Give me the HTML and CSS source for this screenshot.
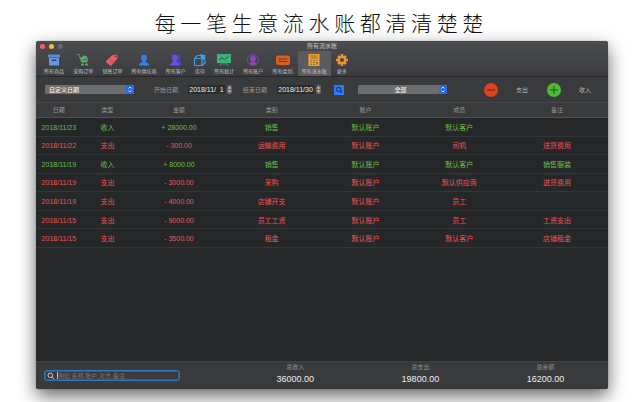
FILE: index.html
```html
<!DOCTYPE html>
<html lang="zh-CN">
<head>
<meta charset="utf-8">
<meta name="viewport" content="width=device-width, initial-scale=1">
<title>所有流水账</title>
<link rel="stylesheet" href="styles.css">
</head>
<body>
<h1 class="headline">每 一 笔 生 意 流 水 账 都 清 清 楚 楚</h1>
<main class="window">
  <header class="chrome">
    <div class="titlebar">
      <div class="lights"><span class="light close"></span><span class="light minimize"></span><span class="light zoom"></span></div>
      <span class="title">所有流水账</span>
    </div>
    <nav class="toolbar">
      <button class="tool" type="button">
        <svg class="icon" viewBox="0 0 24 24"><path fill="#5c8ddb" d="M0 1h24v6H0z"/><path fill="#6796e4" d="M2 8h20v15H2z"/><path fill="#34465f" d="M7 11h10v3H7z"/></svg>
        <span>所有商品</span></button>
      <button class="tool" type="button">
        <svg class="icon" viewBox="0 0 24 24"><path fill="none" stroke="#58a55c" stroke-width="2" d="M0 1h4l5 15h12"/><path fill="#65b868" d="M7 7l4-1 2-4 3 3 4-1v4l3 1-3 7H10z"/><circle cx="11" cy="21" r="2.4" fill="#65b868"/><circle cx="19" cy="21" r="2.4" fill="#65b868"/><path stroke="#365a3b" stroke-width="1" d="M9 11h12M14 7v8M18 7v8"/></svg>
        <span>采购订单</span></button>
      <button class="tool" type="button">
        <svg class="icon" viewBox="0 0 24 24"><path fill="#ed5c60" d="M0 14L13 2l9-1 1 8-12 14q-2 1-4-1l-6-5q-2-1-1-3z"/><circle cx="19" cy="5" r="1.8" fill="#48494c"/><path stroke="#b5474b" stroke-width="1.5" d="M7 14l6 5M10 11l6 5"/></svg>
        <span>销售订单</span></button>
      <button class="tool" type="button">
        <svg class="icon" viewBox="0 0 24 24"><path fill="#2f83ee" d="M12 1c4 0 6 3 6 7 0 3-2 4-3 6v2l6 3q1 1 1 4H2q0-3 1-4l6-3v-2C8 12 6 11 6 8c0-4 2-7 6-7z"/></svg>
        <span>所有供应商</span></button>
      <button class="tool" type="button">
        <svg class="icon" viewBox="0 0 24 24"><path fill="#4a43bd" d="M16 2c4 0 6 3 5 7l-2 6 5 4v3H13z"/><path fill="#6553e5" d="M9 1c5 0 7 3 6 8l-2 5v2l5 3q2 1 1 4H0q0-3 2-4l4-3v-2L4 9C3 4 5 1 9 1z"/></svg>
        <span>所有客户</span></button>
      <button class="tool" type="button">
        <svg class="icon wide" viewBox="0 0 26 24"><path fill="none" stroke="#469de0" stroke-width="2.4" stroke-linejoin="round" d="M2 9h15v14H2zM2 9l6-6h15l-6 6M23 12v6l-6 5"/><path fill="#469de0" d="M12 2l5-2 4 3 3 4-2 6-5-3z"/></svg>
        <span>库存</span></button>
      <button class="tool" type="button">
        <svg class="icon wide" viewBox="0 0 28 24"><path fill="#3eaf78" d="M0 0h28v18H0z"/><path fill="none" stroke="#236144" stroke-width="2" d="M4 12l6-5 5 4 8-6"/><path stroke="#3eaf78" stroke-width="2" d="M14 18v4M10 18l-4 6M18 18l4 6"/></svg>
        <span>所有统计</span></button>
      <button class="tool" type="button">
        <svg class="icon" viewBox="0 0 24 24"><circle cx="12" cy="12" r="11" fill="none" stroke="#7e3fa8" stroke-width="2"/><path fill="#8c45b9" d="M12 3c4 0 6 3 6 6s-2 4-3 6v1l5 3q-3 4-8 4t-8-4l5-3v-1c-1-2-3-3-3-6s2-6 6-6z"/></svg>
        <span>所有账户</span></button>
      <button class="tool" type="button">
        <svg class="icon wide" viewBox="0 0 28 24"><rect y="3" width="28" height="19" rx="4" fill="#d5601f"/><path stroke="#6e371d" stroke-width="2.4" d="M5 10h18M5 15h18"/></svg>
        <span>所有类别</span></button>
      <button class="tool selected" type="button" aria-current="page">
        <svg class="icon" viewBox="0 0 24 24"><path fill="#f3a12e" d="M1 0h22v24H1z"/><path stroke="#93682e" stroke-width="2" d="M5 4h14M5 8h14M5 13h3M10 13h4M16 13h3M5 17h3M10 17h4M5 21h3M10 21h4"/><path stroke="#93682e" stroke-width="3" d="M17.500 16v5"/></svg>
        <span>所有流水账</span></button>
      <button class="tool" type="button">
        <svg class="icon" viewBox="0 0 24 24"><g stroke="#ec932d" stroke-width="5"><path d="M12 0v24M0 12h24M4 4l16 16M20 4L4 20"/></g><circle cx="12" cy="12" r="8.500" fill="#ec932d"/><circle cx="12" cy="12" r="4" fill="#48494c"/></svg>
        <span>更多</span></button>
    </nav>
  </header>

  <form class="filters">
    <span class="picker range">
      <select aria-label="日期范围"><option>自定义日期</option></select>
      <svg class="arrows" viewBox="0 0 8 9"><path d="M2.500 3.500L4 2l1.500 1.500M2.500 5.500L4 7l1.500-1.500"/></svg>
    </span>
    <span class="date start"><label for="start">开始日期</label><input id="start" type="text" value="2018/11/&nbsp; 1"><button class="stepper" type="button" aria-label="调整开始日期"><svg viewBox="0 0 5 9"><path d="M1 3.500L2.500 1.500 4 3.500zM1 5.500L2.500 7.500 4 5.500z"/></svg></button></span>
    <span class="date end"><label for="end">结束日期</label><input id="end" type="text" value="2018/11/30"><button class="stepper" type="button" aria-label="调整结束日期"><svg viewBox="0 0 5 9"><path d="M1 3.500L2.500 1.500 4 3.500zM1 5.500L2.500 7.500 4 5.500z"/></svg></button></span>
    <button class="find" type="button" aria-label="查找"><svg viewBox="0 0 10 10"><circle cx="4.700" cy="4.500" r="2.200"/><path d="M6.300 6.200L8 8"/></svg></button>
    <span class="picker kind">
      <select aria-label="类别"><option>全部</option></select>
      <svg class="arrows" viewBox="0 0 8 9"><path d="M2.500 3.500L4 2l1.500 1.500M2.500 5.500L4 7l1.500-1.500"/></svg>
    </span>
    <span class="entry"><button class="round" id="expense" type="button"><svg viewBox="0 0 14 14"><circle cx="7" cy="7" r="7" fill="#e0421e"/><path stroke="#5b2417" d="M3 7h8"/></svg></button><label for="expense">支出</label></span>
    <span class="entry"><button class="round" id="income" type="button"><svg viewBox="0 0 14 14"><circle cx="7" cy="7" r="7" fill="#4dbb34"/><path stroke="#234f1b" d="M3 7h8M7 3v8"/></svg></button><label for="income">收入</label></span>
  </form>

  <section class="ledger">
    <table>
      <colgroup><col class="c-date"><col class="c-type"><col class="c-amount"><col class="c-wide"><col class="c-wide"><col class="c-wide"><col></colgroup>
      <thead><tr><th>日期</th><th>类型</th><th>金额</th><th>类别</th><th>账户</th><th>成员</th><th>备注</th></tr></thead>
      <tbody>
        <tr class="in"><td>2018/11/23</td><td>收入</td><td>+ 28000.00</td><td>销售</td><td>默认账户</td><td>默认客户</td><td></td></tr>
        <tr class="out"><td>2018/11/22</td><td>支出</td><td>- 300.00</td><td>运输费用</td><td>默认账户</td><td>司机</td><td>送货费用</td></tr>
        <tr class="in"><td>2018/11/19</td><td>收入</td><td>+ 8000.00</td><td>销售</td><td>默认账户</td><td>默认客户</td><td>销售服装</td></tr>
        <tr class="out"><td>2018/11/19</td><td>支出</td><td>- 3000.00</td><td>采购</td><td>默认账户</td><td>默认供应商</td><td>进货费用</td></tr>
        <tr class="out"><td>2018/11/19</td><td>支出</td><td>- 4000.00</td><td>店铺开支</td><td>默认账户</td><td>员工</td><td></td></tr>
        <tr class="out"><td>2018/11/15</td><td>支出</td><td>- 9000.00</td><td>员工工资</td><td>默认账户</td><td>员工</td><td>工资支出</td></tr>
        <tr class="out"><td>2018/11/15</td><td>支出</td><td>- 3500.00</td><td>租金</td><td>默认账户</td><td>默认客户</td><td>店铺租金</td></tr>
      </tbody>
    </table>
  </section>

  <footer class="summary">
    <label class="search"><svg viewBox="0 0 8 8"><circle cx="3.300" cy="3.300" r="2.300"/><path d="M5 5l2.200 2.200"/></svg><input type="text" aria-label="搜索" placeholder="例如:名称,账户,对方,备注..."></label>
    <div class="total"><span>总收入</span><strong>36000.00</strong></div>
    <div class="total"><span>总支出</span><strong>19800.00</strong></div>
    <div class="total"><span>总余额</span><strong>16200.00</strong></div>
  </footer>
</main>
</body>
</html>
```
FILE: styles.css
```css
* { box-sizing: border-box; }

body {
  margin: 0;
  min-height: 100vh;
  display: flex;
  flex-direction: column;
  background: #fff;
  color: #b4b5b6;
  font: 6px/8px "Liberation Sans", "Noto Sans CJK SC", sans-serif;
}

button, input, select {
  margin: 0;
  padding: 0;
  border: 0;
  background: none;
  color: inherit;
  font: inherit;
}

svg { display: block; }

.headline {
  margin: 7px 0 4px;
  padding-right: 5px;
  color: #111;
  font-family: "Noto Sans CJK SC", sans-serif;
  font-size: 21px;
  font-weight: 300;
  line-height: 30px;
  text-align: center;
}

.window {
  flex: 1;
  display: flex;
  flex-direction: column;
  margin: 0 35px 13px 36px;
  border-radius: 3px;
  overflow: hidden;
  background: #262729;
  box-shadow: 0 7px 18px rgba(0, 0, 0, 0.6), 0 0 1px rgba(0, 0, 0, 0.6);
}

/* Title bar and toolbar */
.chrome {
  background: linear-gradient(#4b4c50, #3b3c3f);
  border-bottom: 1px solid #29292b;
}

.titlebar {
  display: grid;
  grid-template-columns: 1fr auto 1fr;
  align-items: center;
  height: 10px;
  padding: 0 4px;
}

.lights { display: flex; gap: 4px; }
.light { width: 5px; height: 5px; border-radius: 50%; }
.close { background: #f9605a; }
.minimize { background: #e9c143; }
.zoom { background: #68696c; }
.title { color: #c4c4c6; }

.toolbar {
  display: flex;
  justify-content: space-between;
  max-width: 312px;
  margin-left: 4px;
}

.tool {
  display: flex;
  flex-direction: column;
  align-items: center;
  gap: 1px;
  height: 25px;
  padding: 3px 4px 0;
  color: #c3c3c5;
  font-size: 5px;
  white-space: nowrap;
}

.tool.selected { background: #5a5b5d; }
.icon { width: 12px; height: 12px; }
.icon.wide { width: 14px; margin: 0 -2px; }

/* Filter row */
.filters {
  display: flex;
  align-items: center;
  height: 25px;
  padding: 0 9px;
  background: #393a3c;
}

.picker { position: relative; width: 89px; }

.picker select {
  display: block;
  width: 100%;
  height: 9px;
  padding: 0 12px 0 4px;
  appearance: none;
  border-radius: 1px;
  background: #6c6d6f;
  color: #f0f0f0;
  font-weight: 500;
}

.kind select { padding-left: 8px; text-align: center; text-align-last: center; }

.arrows {
  position: absolute;
  top: 0;
  right: 0;
  width: 8px;
  height: 9px;
  border-radius: 1px;
  background: #2c68e8;
  pointer-events: none;
}

.arrows path { fill: none; stroke: #fff; stroke-width: 0.8; }

.date {
  display: flex;
  align-items: center;
  margin-left: 20px;
  color: #98999b;
}

.date.end { margin-left: 11px; }

.date input {
  width: 37px;
  height: 9px;
  margin: 0 2px 0 10px;
  background: #2c2d2f;
  color: #ededed;
  font-size: 7px;
  text-align: center;
}

.stepper { width: 5px; height: 9px; border-radius: 2px; background: #65666a; }
.stepper path { fill: #e4e4e4; }

.find { width: 10px; height: 10px; margin: 0 14px 0 13px; background: #2e7bf6; }
.find svg { fill: none; stroke: #163d80; stroke-width: 1.2; }

.entry { display: flex; align-items: center; gap: 18px; margin-left: 19px; }
.kind + .entry { margin-left: 37px; }
.round { width: 14px; height: 14px; }

/* Ledger */
.ledger { flex: 1; }

table {
  width: 100%;
  height: 146px;
  border-collapse: collapse;
  table-layout: fixed;
  text-align: center;
}

.c-date { width: 8%; }
.c-type { width: 9%; }
.c-amount { width: 16%; }
.c-wide { width: 16.4%; }

th {
  height: 15px;
  padding: 0;
  border-top: 1px solid #47484a;
  border-bottom: 1px solid #505153;
  background: #393a3c;
  color: #98999b;
  font-weight: 400;
}

td {
  padding: 2px 0 0;
  border-bottom: 1px solid #343537;
  font-size: 7px;
}

.in { color: #64c043; }
.out { color: #f05554; }

/* Summary */
.summary {
  display: grid;
  grid-template-columns: 34.4% 1fr 1fr 1fr;
  align-items: start;
  height: 28px;
  border-top: 1px solid #434446;
  background: #393a3c;
}

.search {
  display: flex;
  align-items: center;
  gap: 2px;
  height: 11px;
  margin: 8px 53px 0 8px;
  padding: 0 2px;
  border: 1px solid #3478b4;
  border-radius: 3px;
  box-shadow: inset 0 0 0 1px #2d5b84;
}

.search svg { width: 8px; height: 8px; fill: none; stroke: #d0d0d0; }
.search input { flex: 1; min-width: 0; height: 7px; border-left: 1px solid #c4c4c4; outline: 0; }
.search input::placeholder { color: #77787b; opacity: 1; }

.total {
  display: flex;
  flex-direction: column;
  align-items: center;
  gap: 3px;
  padding-top: 1px;
  color: #919294;
}

.total strong { color: #ededed; font-size: 9px; font-weight: 400; line-height: 10px; }
```
